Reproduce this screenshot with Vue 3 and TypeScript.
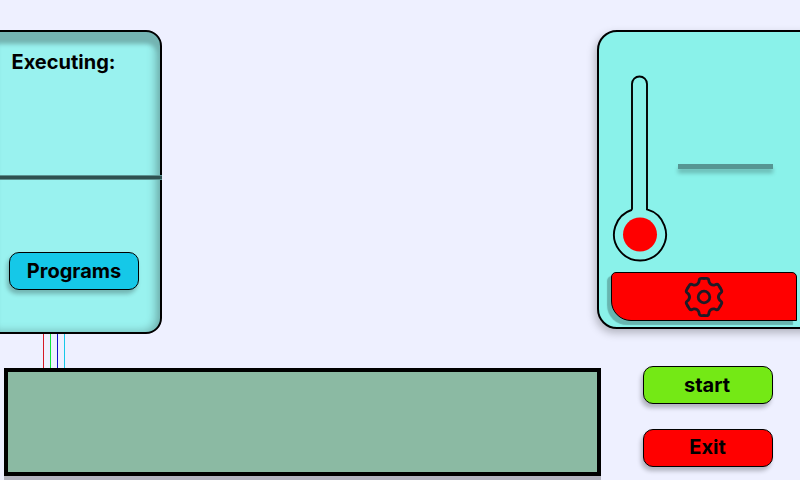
<script setup lang="ts">
const wires: string[] = ['red', 'green', 'blue', 'cyan']
const cogAngles: number[] = [0, 60, 120, 180, 240, 300]
</script>

<template>
  <main class="screen">
    <div class="left">
      <section class="panel programs">
        <div class="upper"><h2>Executing:</h2></div>
        <div class="divider" role="separator"></div>
        <div class="lower"><button class="btn sky">Programs</button></div>
      </section>
      <div class="wires">
        <i v-for="w in wires" :key="w" :class="w"></i>
      </div>
      <div class="console"></div>
    </div>
    <div class="right">
      <section class="panel temperature">
        <div class="gauge">
          <svg class="thermo" width="56" height="188" viewBox="0 0 56 188">
            <path d="M20 134.76V9a7.5 7.5 0 0 1 15 0V134.46A26 26 0 1 1 20 134.76" fill="none" stroke="#000" stroke-width="1.9" />
            <circle cx="28" cy="159.5" r="17" fill="#f00" />
          </svg>
          <div class="reading"></div>
        </div>
        <button class="settings" aria-label="Settings">
          <svg width="42" height="42" viewBox="-21 -21 42 42" fill="none" stroke="#1d1b26" stroke-width="2.8" stroke-linecap="round" stroke-linejoin="round">
            <path v-for="a in cogAngles" :key="a" :transform="`rotate(${a})`" d="M16.1-9.3 17.4-7Q18.3-5.4 17-4.3L15.6-3.1Q13.2 0 15.6 3.1L17 4.3Q18.3 5.4 17.4 7L16.1 9.3" />
            <circle r="5.8" />
          </svg>
        </button>
      </section>
      <div class="actions">
        <button class="btn lime">start</button>
        <button class="btn crimson">Exit</button>
      </div>
    </div>
  </main>
</template>

<style>
body {
  margin: 0;
  overflow: hidden;
}
</style>

<style scoped>
.screen {
  box-sizing: border-box;
  width: 800px;
  height: 480px;
  overflow: hidden;
  display: flex;
  background: #eef0ff;
  font-family: Inter, "Liberation Sans", sans-serif;
  color: #000;
}
.left {
  width: 597px;
  flex: none;
  padding-top: 30px;
}
.panel {
  box-sizing: border-box;
  border: 2px solid #000;
}
.programs {
  width: 168px;
  height: 304px;
  margin-left: -6px;
  border-radius: 0 16px 16px 0;
  background: #99f2ef;
  box-shadow: inset 0 12px 4px #74b4b2, inset -4px 0 10px rgba(0, 0, 0, 0.28);
}
.upper {
  height: 143px;
  box-sizing: border-box;
  padding: 18px 0 0 15.5px;
}
h2 {
  margin: 0;
  font-size: 20px;
  line-height: 24px;
  font-weight: 700;
}
.divider {
  box-sizing: border-box;
  width: 166px;
  height: 5px;
  border: solid #5c9290;
  border-width: 1px 0;
  background: #2e5150;
}
.lower {
  padding: 72px 0 0 13px;
}
.btn {
  display: block;
  box-sizing: border-box;
  width: 130px;
  height: 38px;
  padding: 0;
  border: 1px solid #000;
  border-radius: 10px;
  font: 700 20px/24px Inter, "Liberation Sans", sans-serif;
  color: #000;
  box-shadow: -2px 4px 4px rgba(0, 0, 0, 0.25);
}
.sky { background: #15c8e8; }
.lime {
  background: #74e915;
  padding-right: 2px;
}
.crimson {
  background: #f00;
  padding: 0 1px 2px 0;
}
.wires {
  display: flex;
  gap: 6px;
  height: 34px;
  padding-left: 43px;
}
.wires i { width: 1px; }
.red { background: #d61a24; }
.green { background: #0ee63c; }
.blue { background: #1410c8; }
.cyan { background: #15c8e8; }
.console {
  box-sizing: border-box;
  width: 597px;
  height: 108px;
  margin-left: 4px;
  border: 4px solid #000;
  background: #8bbaa3;
  box-shadow: 0 8px 0 #b2b3bf;
}
.right {
  width: 230px;
  flex: none;
  padding-top: 30px;
}
.temperature {
  height: 299px;
  border-radius: 20px;
  background: #8af2ea;
  box-shadow: -2px 4px 8px rgba(0, 0, 0, 0.25);
  padding: 43px 0 0 12px;
}
.gauge {
  display: flex;
  height: 197px;
  padding-left: 1px;
}
.thermo { flex: none; }
.reading {
  width: 95px;
  height: 5px;
  margin: 89px 0 0 10px;
  background: #569693;
  box-shadow: 0 4px 4px rgba(0, 0, 0, 0.25);
}
.settings {
  display: flex;
  align-items: center;
  justify-content: center;
  box-sizing: border-box;
  width: 186px;
  height: 49px;
  padding: 1px 0 0;
  border: 1px solid #000;
  border-radius: 5px 5px 0 20px;
  background: #f00;
  box-shadow: -4px 4px 1px rgba(0, 0, 0, 0.25);
}
.actions {
  display: flex;
  flex-direction: column;
  gap: 25px;
  padding: 37px 0 0 46px;
}
</style>
